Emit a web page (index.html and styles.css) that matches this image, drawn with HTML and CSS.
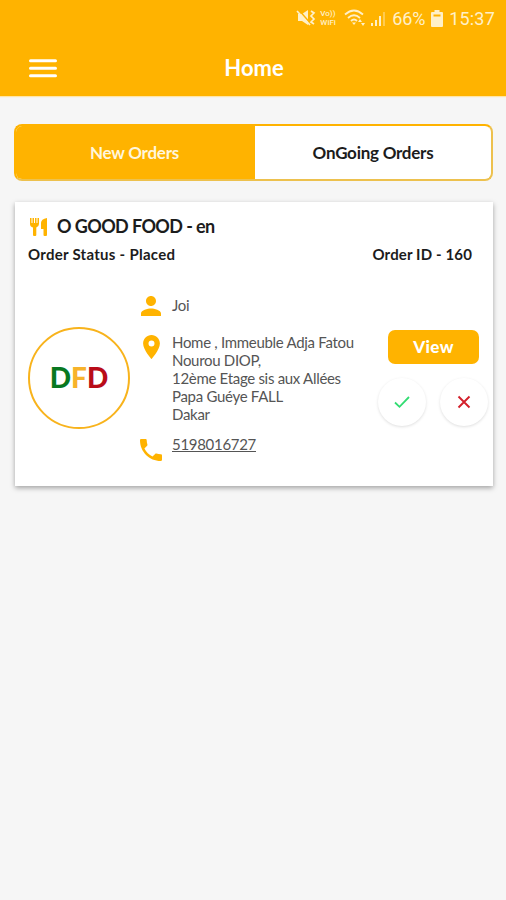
FILE: index.html
```html
<!DOCTYPE html>
<html lang="en">
<head>
<meta charset="utf-8">
<title>Home</title>
<link rel="stylesheet" href="styles.css">
</head>
<body>
<header class="header">
  <div class="status">
    <svg class="mute" width="20" height="20" viewBox="0 0 20 20"><path d="M2 6h4l6-4v15l-6-4H2z" fill="currentColor"/><path d="M2 1l13 15" stroke="#ffb300" stroke-width="1.500"/><path d="M1 3l13 14M15 3l3 2-3 3 3 3-3 3 3 2" fill="none" stroke="currentColor" stroke-width="1.700"/></svg>
    <div class="vowifi"><span>Vo))</span><span>WiFi</span></div>
    <svg class="wifi" width="22" height="18" viewBox="0 0 22 18"><path d="M1 5.500q9-8 18 0M4 9q6-5.500 12 0M7 12q3-3 6 0" fill="none" stroke="currentColor" stroke-width="1.800"/><path d="M8 13.500h4l-2 2.500zM14 13l2-3 2 3zM17 14h4l-2 3z" fill="currentColor"/></svg>
    <svg class="signal" width="18" height="16" viewBox="0 0 18 16"><path d="M1 12h2v3H1zM5 9h2v6H5zM9 5h2v10H9z" fill="currentColor"/><path d="M13 1h2v14h-2z" fill="currentColor" opacity=".4"/></svg>
    <span class="percent">66%</span>
    <svg class="battery" width="12" height="17" viewBox="0 0 12 17"><path d="M3.500 0h5v2H11a1 1 0 0 1 1 1v13a1 1 0 0 1-1 1H1a1 1 0 0 1-1-1V3a1 1 0 0 1 1-1h2.500z" fill="currentColor"/><path d="M2.500 4.500h7v2h-7z" fill="#ffb300"/></svg>
    <span class="clock">15:37</span>
  </div>
  <div class="appbar">
    <svg class="menu" width="28" height="20" viewBox="0 0 28 20"><path d="M1.500 1.700h25M1.500 9.200h25M1.500 16.700h25" stroke="currentColor" stroke-width="3" stroke-linecap="round"/></svg>
    <h1 class="heading">Home</h1>
  </div>
</header>
<main class="content">
  <nav class="tabs">
    <div class="tab active"><span class="tab-new">New Orders</span></div>
    <div class="tab"><span class="tab-ongoing">OnGoing Orders</span></div>
  </nav>
  <article class="card">
    <div class="title-row">
      <svg width="20" height="20" viewBox="0 0 20 20" fill="#ffb300"><path d="M2 1h1.500v5h1V1H6v5h1V1h1.500v5h1V1H11v6q0 2.500-2.700 3.500V18a1 1 0 0 1-1 1H6a1 1 0 0 1-1-1v-7.500Q2 9.500 2 7zM19 1v17q0 1-1 1h-1.500q-1 0-1-1v-6H13V6q0-4 6-5z"/></svg>
      <h2 class="restaurant">O GOOD FOOD - en</h2>
    </div>
    <div class="meta"><span class="order-status">Order Status - Placed</span><span class="order-id">Order ID - 160</span></div>
    <div class="details">
      <div class="logo"><span class="g">D</span><span class="y">F</span><span class="r">D</span></div>
      <div class="info">
        <svg class="person" width="20" height="20" viewBox="4 4 16 16" fill="#ffb300"><path d="M12 12c2.210 0 4-1.790 4-4s-1.790-4-4-4-4 1.790-4 4 1.790 4 4 4zm0 2c-2.670 0-8 1.340-8 4v2h16v-2c0-2.660-5.330-4-8-4z"/></svg>
        <div class="name">Joi</div>
        <svg class="pin" width="17" height="24" viewBox="5 2 14 20" fill="#ffb300"><path d="M12 2C8.130 2 5 5.130 5 9c0 5.250 7 13 7 13s7-7.750 7-13c0-3.870-3.130-7-7-7zm0 9.500a2.500 2.500 0 0 1 0-5 2.500 2.500 0 0 1 0 5z"/></svg>
        <div class="address"><span>Home , Immeuble Adja Fatou</span><span>Nourou DIOP,</span><span>12ème Etage sis aux Allées</span><span>Papa Guéye FALL</span><span>Dakar</span></div>
        <svg class="phone" width="22" height="22" viewBox="3 3 18 18" fill="#ffb300"><path d="M6.620 10.790c1.440 2.830 3.760 5.140 6.590 6.590l2.200-2.200c.270-.270.670-.360 1.020-.240 1.120.370 2.330.570 3.570.570.550 0 1 .450 1 1V20c0 .550-.450 1-1 1-9.390 0-17-7.610-17-17 0-.550.450-1 1-1h3.500c.550 0 1 .450 1 1 0 1.250.200 2.450.570 3.570.110.350.030.740-.250 1.020l-2.200 2.200z"/></svg>
        <div class="number">5198016727</div>
      </div>
      <div class="actions">
        <button class="view">View</button>
        <div class="decide">
          <button class="round" aria-label="Accept"><svg width="18" height="14" viewBox="0 0 18 14"><path d="M2 7.500l4.500 4.300L16 2" fill="none" stroke="#32dc72" stroke-width="1.800"/></svg></button>
          <button class="round" aria-label="Reject"><svg width="14" height="14" viewBox="0 0 14 14"><path d="M1.500 1.500l11 11M12.500 1.500l-11 11" stroke="#d3202b" stroke-width="1.900"/></svg></button>
        </div>
      </div>
    </div>
  </article>
</main>
</body>
</html>
```
FILE: styles.css
```css
* { box-sizing: border-box; }
body { margin: 0; min-height: 900px; background: #f6f6f6; font-family: Lato, sans-serif; color: #1c1c1c; }
svg { display: block; flex: none; }
h1, h2 { margin: 0; }
span { white-space: nowrap; }
.header { height: 96px; background: #ffb300; color: #fff; box-shadow: 0 1px 1px #ffe5a8; }
.status { height: 36px; display: flex; align-items: center; justify-content: flex-end; padding-right: 11px; color: #fff0c8; font-family: Roboto, sans-serif; font-size: 18px; }
.mute { margin-right: 4px; }
.vowifi { display: flex; flex-direction: column; font-size: 8px; line-height: 9px; font-weight: 500; width: 18px; margin-right: 6px; }
.wifi { margin-right: 4px; }
.signal { margin: 2px 4px 0 0; }
.percent { margin-right: 6px; letter-spacing: -.2px; }
.battery { margin-right: 6px; }
.clock { letter-spacing: .2px; }
.appbar { height: 60px; padding: 0 29px; display: grid; grid-template-columns: 28px 1fr 28px; align-items: center; }
.menu { margin-top: 5px; }
.heading { font-size: 22px; line-height: 28px; font-weight: 700; text-align: center; margin-top: 4px; padding-left: 2px; }
.content { padding: 28px 13px 0 14px; }
.tabs { height: 57px; display: flex; border: 2px solid; border-color: #ffb300 #edc14e #edc14e #ffb300; border-radius: 8px; overflow: hidden; background: #fff; }
.tab { flex: 1; display: flex; align-items: center; justify-content: center; font-size: 17px; font-weight: 700; letter-spacing: -.25px; }
.tab.active { flex: 0 0 239px; padding-right: 2px; background: #ffb300; color: #fff6dc; }
.card { height: 284px; margin: 21px 0 0 1px; padding: 14px 4px 0 13px; background: #fff; box-shadow: 0 2px 5px rgba(0,0,0,.34); }
.title-row { display: flex; align-items: center; height: 21px; gap: 9px; }
.restaurant { font-size: 18px; line-height: 21px; font-weight: 700; letter-spacing: -.6px; white-space: nowrap; }
.meta { display: flex; justify-content: space-between; margin-top: 7px; padding-right: 17px; font-size: 15px; line-height: 20px; font-weight: 700; }
.order-status { letter-spacing: .27px; }
.order-id { letter-spacing: .13px; }
.details { display: grid; grid-template-columns: 102px 243px 1fr; margin-top: 30px; }
.logo { width: 102px; height: 102px; margin-top: 33px; padding-bottom: 2px; border: 2px solid #f8b31c; border-radius: 50%; display: flex; align-items: center; justify-content: center; font: 900 28px Lato, sans-serif; }
.g { color: #087821; } .y { color: #f7b32b; } .r { color: #b90c18; }
.info { display: grid; grid-template-columns: 42px 1fr; grid-template-rows: 39px 102px 30px; align-items: start; color: #555; font-size: 15px; line-height: 18px; letter-spacing: -.3px; }
.info svg { justify-self: center; }
.person { margin-top: 2px; }
.pin { margin-top: 2px; }
.phone { margin-top: 4px; }
.name { margin-top: 2px; }
.address { display: flex; flex-direction: column; align-items: flex-start; }
.number { justify-self: start; text-decoration: underline; }
.actions { padding-top: 36px; display: flex; flex-direction: column; }
.view { width: 91px; height: 34px; margin-left: 15px; border: 0; border-radius: 7px; background: #ffb300; color: #fff; font: 900 17px/34px Lato, sans-serif; letter-spacing: .4px; padding: 0; }
.decide { display: flex; gap: 14px; margin: 14px 0 0 5px; }
.round { width: 48px; height: 48px; flex: none; border: 0; padding: 0; border-radius: 50%; background: #fff; display: flex; align-items: center; justify-content: center; box-shadow: 0 1px 3px rgba(0,0,0,.13); }
```
